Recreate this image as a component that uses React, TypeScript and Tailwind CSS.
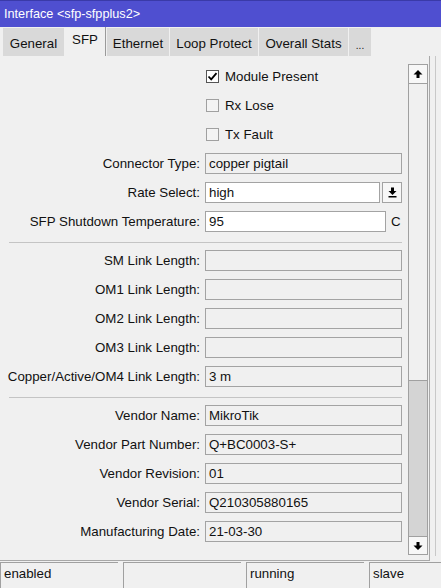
import React from "react";

type Row =
  | { kind: "check"; label: string; checked: boolean }
  | { kind: "field"; label: string; value: string; editable?: boolean; select?: boolean; unit?: string }
  | { kind: "sep" };

const rows: Row[] = [
  { kind: "check", label: "Module Present", checked: true },
  { kind: "check", label: "Rx Lose", checked: false },
  { kind: "check", label: "Tx Fault", checked: false },
  { kind: "field", label: "Connector Type:", value: "copper pigtail" },
  { kind: "field", label: "Rate Select:", value: "high", editable: true, select: true },
  { kind: "field", label: "SFP Shutdown Temperature:", value: "95", editable: true, unit: "C" },
  { kind: "sep" },
  { kind: "field", label: "SM Link Length:", value: "" },
  { kind: "field", label: "OM1 Link Length:", value: "" },
  { kind: "field", label: "OM2 Link Length:", value: "" },
  { kind: "field", label: "OM3 Link Length:", value: "" },
  { kind: "field", label: "Copper/Active/OM4 Link Length:", value: "3 m" },
  { kind: "sep" },
  { kind: "field", label: "Vendor Name:", value: "MikroTik" },
  { kind: "field", label: "Vendor Part Number:", value: "Q+BC0003-S+" },
  { kind: "field", label: "Vendor Revision:", value: "01" },
  { kind: "field", label: "Vendor Serial:", value: "Q210305880165" },
  { kind: "field", label: "Manufacturing Date:", value: "21-03-30" },
];

const tabs = [
  { name: "General", w: "w-[61px]" },
  { name: "SFP", w: "w-[41px]" },
  { name: "Ethernet", w: "w-[62px]" },
  { name: "Loop Protect", w: "w-[88px]" },
  { name: "Overall Stats", w: "w-[89px]" },
  { name: "...", w: "w-[22px]" },
];

function ArrowUp() {
  return (
    <svg width="10" height="10" viewBox="0 0 10 10">
      <path d="M5 1 L9.5 5.5 L6.5 5.5 L6.5 9 L3.5 9 L3.5 5.5 L0.5 5.5 Z" fill="#000" />
    </svg>
  );
}

function ArrowDown() {
  return (
    <svg width="10" height="10" viewBox="0 0 10 10">
      <path d="M5 9 L9.5 4.5 L6.5 4.5 L6.5 1 L3.5 1 L3.5 4.5 L0.5 4.5 Z" fill="#000" />
    </svg>
  );
}

function DropArrow() {
  return (
    <svg width="9" height="11" viewBox="0 0 9 11">
      <path d="M4.5 8 L8.5 4 L6 4 L6 0.5 L3 0.5 L3 4 L0.5 4 Z" fill="#000" />
      <rect x="0.5" y="9" width="8" height="1.5" fill="#000" />
    </svg>
  );
}

function CheckRow({ label, checked }: { label: string; checked: boolean }) {
  return (
    <div className="h-[29px] flex items-center pl-[206px]">
      <div
        className={`w-[13px] h-[13px] border flex items-center justify-center ${
          checked ? "border-[#555] bg-white" : "border-[#a0a0a0] bg-[#f4f4f4]"
        }`}
      >
        {checked && (
          <svg width="11" height="11" viewBox="0 0 11 11">
            <path d="M1.5 5.5 L4.2 8.3 L9.5 2.2" stroke="#000" strokeWidth="1.8" fill="none" />
          </svg>
        )}
      </div>
      <span className="ml-[6px]">{label}</span>
    </div>
  );
}

function FieldRow({ label, value, editable, select, unit }: Extract<Row, { kind: "field" }>) {
  return (
    <div className="h-[29px] flex items-center">
      <div className="w-[201px] text-right pr-[1px] whitespace-nowrap">{label}</div>
      <div className="ml-[4px] flex items-center">
        <div
          className={`h-[21px] border border-[#a3a3a3] flex items-center pl-[3px] ${
            editable ? "bg-white" : "bg-[#f0f0f0]"
          } ${select ? "w-[175px]" : unit ? "w-[181px]" : "w-[197px]"}`}
        >
          {value}
        </div>
        {select && (
          <div className="ml-[2px] w-[20px] h-[21px] border border-[#a3a3a3] bg-[#f7f7f7] flex items-center justify-center">
            <DropArrow />
          </div>
        )}
        {unit && <span className="ml-[5px]">{unit}</span>}
      </div>
    </div>
  );
}

export default function App() {
  return (
    <div
      className="w-[441px] h-[588px] bg-[#f0f0f0] flex flex-col text-[13.3px] text-[#111] overflow-hidden"
      style={{ fontFamily: '"Liberation Sans", Arial, sans-serif' }}
    >
      {/* title bar */}
      <div className="h-[27px] bg-[#4f4fd0] border-t border-[#3a3aa8] flex items-center pl-[4px] pt-[1px] text-white text-[12.7px]">
        Interface &lt;sfp-sfpplus2&gt;
      </div>

      {/* tab strip */}
      <div className="h-[29px] flex items-end pl-[3px] gap-[1px]">
        {tabs.map((t) => {
          const active = t.name === "SFP";
          return (
            <div
              key={t.name}
              className={`flex items-center justify-center ${t.w} ${
                active
                  ? "h-[29px] bg-[#f0f0f0] border-r border-[#9a9a9a] pb-[3px]"
                  : "h-[28px] bg-[#d9d9d9] pt-[3px]"
              } ${t.name === "..." ? "text-[10px] pt-[7px]" : ""}`}
            >
              {t.name}
            </div>
          );
        })}
      </div>

      {/* tab body */}
      <div className="h-[505px] flex">
        <div className="w-[430px] border-r border-[#a8a8a8] border-b flex">
          <div className="w-[405px] pt-[6px]">
            {rows.map((r, i) => {
              if (r.kind === "sep")
                return (
                  <div key={i} className="h-[10px] pt-[6px] pl-[9px]">
                    <div className="w-[393px] border-t border-[#c4c4c4]" />
                  </div>
                );
              if (r.kind === "check") return <CheckRow key={i} label={r.label} checked={r.checked} />;
              return <FieldRow key={i} {...r} />;
            })}
          </div>

          {/* vertical scrollbar */}
          <div className="ml-[3px] mt-[8px] mb-[5px] w-[20px] flex flex-col border border-[#a0a0a0]">
            <div className="h-[19px] bg-[#f7f7f7] border-b border-[#a0a0a0] flex items-center justify-center">
              <ArrowUp />
            </div>
            <div className="h-[297px] bg-[#f0f0f0] border-b border-[#a0a0a0]" />
            <div className="flex-1 bg-[#d4d4d4]" />
            <div className="h-[18px] bg-[#f7f7f7] border-t border-[#a0a0a0] flex items-center justify-center">
              <ArrowDown />
            </div>
          </div>
        </div>
        <div className="ml-[5px] w-[1px] h-[500px] bg-[#c8c8c8]" />
      </div>

      {/* status bar */}
      <div className="flex-1 flex gap-[5px] pt-[1px]">
        {["enabled", "", "running", "slave"].map((s, i) => (
          <div
            key={i}
            className={`h-full border-t border-l border-[#a0a0a0] flex items-center pl-[3px] pb-[3px] ${
              i === 3 ? "flex-1" : "w-[118px]"
            }`}
          >
            {s}
          </div>
        ))}
      </div>
    </div>
  );
}
